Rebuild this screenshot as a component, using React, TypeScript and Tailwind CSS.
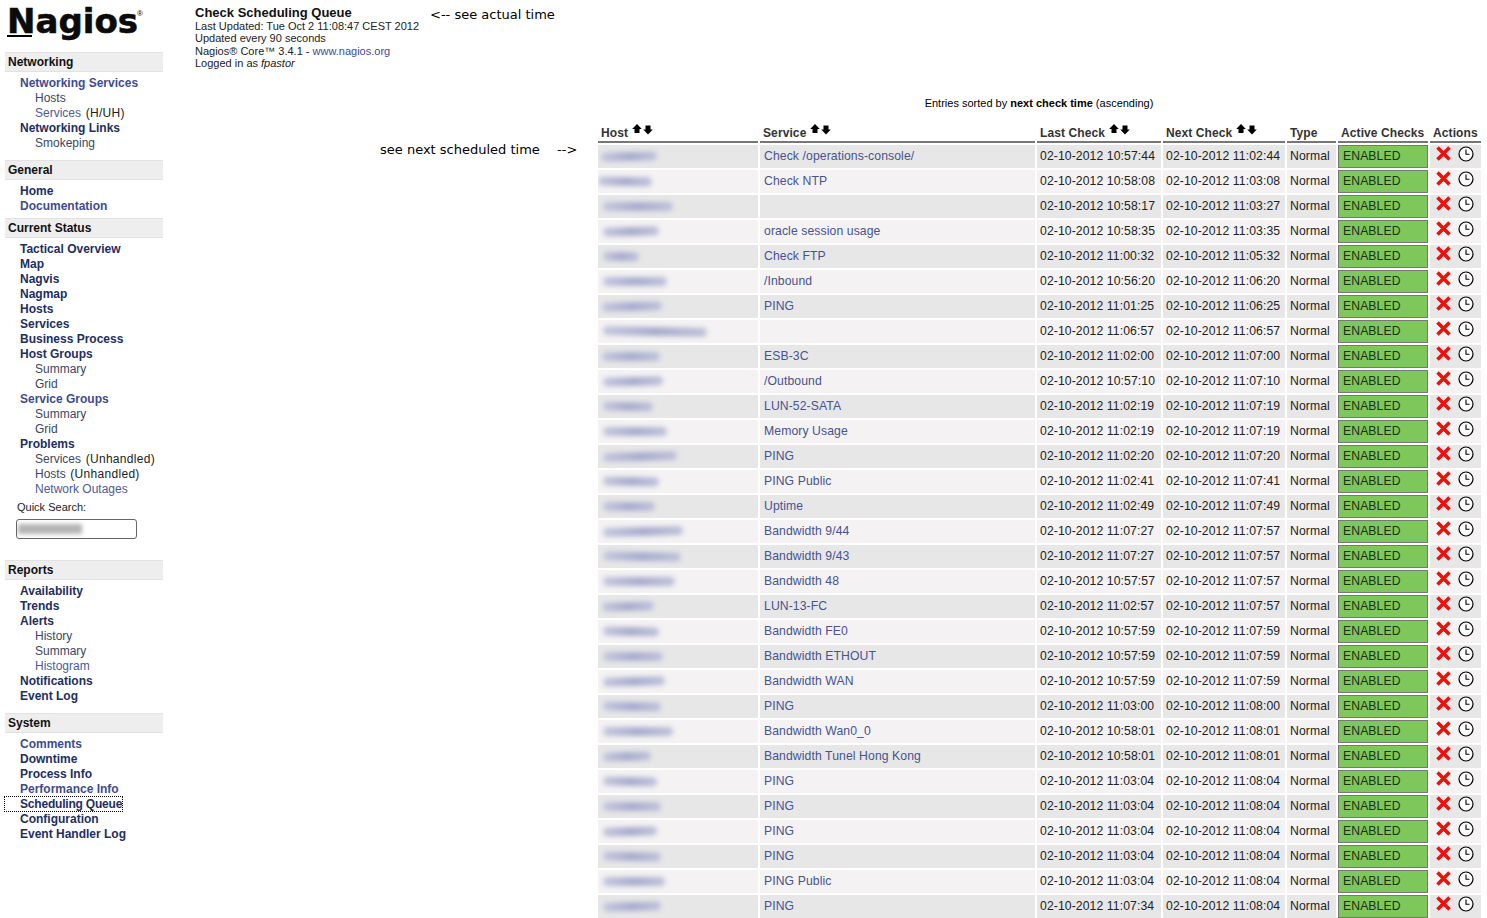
import React from "react";

type Link = { t: string; sub?: boolean; light?: boolean; extra?: string; focus?: boolean };

function NavLink({ l }: { l: Link }) {
  return (
    <div className={`h-[15px] leading-[15px] whitespace-nowrap ${l.sub ? "pl-[35px] font-normal" : "pl-[20px] font-bold"}`}>
      <span
        className={`relative ${l.focus ? "tracking-[-0.2px]" : ""} ${
          l.sub
            ? l.light
              ? "text-[#4d5a96]"
              : "text-[#3c4660]"
            : l.light
            ? "text-[#3f4c8c]"
            : "text-[#222e5e]"
        }`}
      >
        {l.t}
        {l.focus && <span className="absolute left-[-16px] right-[-1px] top-[-1px] bottom-[-1px] border border-dotted border-black" />}
      </span>
      {l.extra && <span className="text-[#222] ml-[1px] tracking-[0.3px]"> {l.extra}</span>}
    </div>
  );
}

function Section({ title, links, mb }: { title: string; links: Link[]; mb: string }) {
  return (
    <div className={mb}>
      <div className="ml-[5px] w-[158px] h-[20px] leading-[19px] bg-[#eeeeee] border-y border-[#e2e2e2] pl-[3px] font-bold text-[#111]">
        {title}
      </div>
      <div className="mt-[4px]">
        {links.map((l) => (
          <NavLink key={l.t + (l.extra ?? "")} l={l} />
        ))}
      </div>
    </div>
  );
}

function SortArrows({ className }: { className?: string }) {
  return (
    <svg width="21" height="11" viewBox="0 0 21 11" className={className}>
      <path d="M5 0 L9.8 5 L7.5 5 L7.5 9 L2.5 9 L2.5 5 L0.2 5 Z" fill="#000" />
      <path d="M16 10.5 L11.2 5.5 L13.5 5.5 L13.5 1.5 L18.5 1.5 L18.5 5.5 L20.8 5.5 Z" fill="#000" />
    </svg>
  );
}

function RedX() {
  return (
    <svg width="15" height="15" viewBox="0 0 15 15">
      <path d="M1.5 1.5 L13.5 13.5 M13.5 1.5 L1.5 13.5" stroke="#e8130c" strokeWidth="3.6" />
    </svg>
  );
}

function Clock() {
  return (
    <svg width="16" height="16" viewBox="0 0 16 16">
      <circle cx="8" cy="8" r="7" fill="#fff" stroke="#000" strokeWidth="1.2" />
      <path d="M8 3.5 V8.3 H11.5" fill="none" stroke="#000" strokeWidth="1.1" />
    </svg>
  );
}

const rows: [number, number, string, string, string][] = [
  [3, 56, "Check /operations-console/", "10:57:44", "11:02:44"],
  [0, 54, "Check NTP", "10:58:08", "11:03:08"],
  [5, 70, "", "10:58:17", "11:03:27"],
  [5, 56, "oracle session usage", "10:58:35", "11:03:35"],
  [5, 36, "Check FTP", "11:00:32", "11:05:32"],
  [5, 64, "/Inbound", "10:56:20", "11:06:20"],
  [4, 60, "PING", "11:01:25", "11:06:25"],
  [5, 104, "", "11:06:57", "11:06:57"],
  [4, 58, "ESB-3C", "11:02:00", "11:07:00"],
  [5, 60, "/Outbound", "10:57:10", "11:07:10"],
  [5, 50, "LUN-52-SATA", "11:02:19", "11:07:19"],
  [5, 64, "Memory Usage", "11:02:19", "11:07:19"],
  [5, 74, "PING", "11:02:20", "11:07:20"],
  [5, 56, "PING Public", "11:02:41", "11:07:41"],
  [5, 52, "Uptime", "11:02:49", "11:07:49"],
  [5, 80, "Bandwidth 9/44", "11:07:27", "11:07:57"],
  [5, 78, "Bandwidth 9/43", "11:07:27", "11:07:57"],
  [5, 72, "Bandwidth 48", "10:57:57", "11:07:57"],
  [4, 52, "LUN-13-FC", "11:02:57", "11:07:57"],
  [5, 56, "Bandwidth FE0", "10:57:59", "11:07:59"],
  [5, 60, "Bandwidth ETHOUT", "10:57:59", "11:07:59"],
  [5, 62, "Bandwidth WAN", "10:57:59", "11:07:59"],
  [5, 58, "PING", "11:03:00", "11:08:00"],
  [5, 70, "Bandwidth Wan0_0", "10:58:01", "11:08:01"],
  [5, 48, "Bandwidth Tunel Hong Kong", "10:58:01", "11:08:01"],
  [5, 54, "PING", "11:03:04", "11:08:04"],
  [5, 58, "PING", "11:03:04", "11:08:04"],
  [5, 54, "PING", "11:03:04", "11:08:04"],
  [5, 58, "PING", "11:03:04", "11:08:04"],
  [5, 62, "PING Public", "11:03:04", "11:08:04"],
  [5, 58, "PING", "11:07:34", "11:08:04"],
];

const th = "text-left font-bold text-[#333] text-[12px] border-b-2 border-[#777] align-bottom p-0 pl-[3px] h-[24px] leading-[15px] whitespace-nowrap";

export default function App() {
  return (
    <div className="w-[1487px] h-[918px] overflow-hidden bg-white flex text-[12px] text-black font-['Liberation_Sans',Arial,sans-serif]">
      <aside className="w-[190px] shrink-0 pt-[7px]">
        <div className="relative h-[45px] shrink-0 pl-[7px] leading-[33px]">
          <span className="relative inline-block text-[34px] font-bold text-[#0b0b0b] font-['DejaVu_Sans',sans-serif] leading-[29px] [-webkit-text-stroke:0.6px_#0b0b0b]">
            Nagios
            <span className="absolute left-0 bottom-[-1px] w-[25px] h-[2.5px] bg-black" />
          </span>
          <span className="absolute left-[137px] top-[2px] text-[8px] leading-[10px] font-['Liberation_Sans',sans-serif]">®</span>
        </div>
        <Section
          title="Networking"
          mb="mb-[9px]"
          links={[
            { t: "Networking Services", light: true },
            { t: "Hosts", sub: true },
            { t: "Services", sub: true, light: true, extra: "(H/UH)" },
            { t: "Networking Links" },
            { t: "Smokeping", sub: true },
          ]}
        />
        <Section
          title="General"
          mb="mb-[4px]"
          links={[{ t: "Home" }, { t: "Documentation", light: true }]}
        />
        <Section
          title="Current Status"
          mb="mb-0"
          links={[
            { t: "Tactical Overview" },
            { t: "Map" },
            { t: "Nagvis" },
            { t: "Nagmap" },
            { t: "Hosts" },
            { t: "Services" },
            { t: "Business Process" },
            { t: "Host Groups" },
            { t: "Summary", sub: true },
            { t: "Grid", sub: true },
            { t: "Service Groups", light: true },
            { t: "Summary", sub: true },
            { t: "Grid", sub: true },
            { t: "Problems" },
            { t: "Services", sub: true, extra: "(Unhandled)" },
            { t: "Hosts", sub: true, extra: "(Unhandled)" },
            { t: "Network Outages", sub: true, light: true },
          ]}
        />
        <div className="mt-[3px] pl-[17px] h-[15px] leading-[15px] text-[11px] text-[#222]">Quick Search:</div>
        <div className="mt-[4px] ml-[16px] w-[121px] h-[20px] rounded-[3px] border border-[#666] bg-white overflow-hidden pl-[1px] pt-[4px]">
          <div className="w-[64px] h-[10px] bg-[#b4b4b4] blur-[2px]" />
        </div>
        <div className="h-[21px]" />
        <Section
          title="Reports"
          mb="mb-[9px]"
          links={[
            { t: "Availability" },
            { t: "Trends" },
            { t: "Alerts" },
            { t: "History", sub: true },
            { t: "Summary", sub: true },
            { t: "Histogram", sub: true, light: true },
            { t: "Notifications" },
            { t: "Event Log" },
          ]}
        />
        <Section
          title="System"
          mb="mb-0"
          links={[
            { t: "Comments", light: true },
            { t: "Downtime" },
            { t: "Process Info" },
            { t: "Performance Info", light: true },
            { t: "Scheduling Queue", focus: true },
            { t: "Configuration" },
            { t: "Event Handler Log" },
          ]}
        />
      </aside>

      <main className="flex-1 min-w-0 flex flex-col">
        <div className="h-[96px] shrink-0 flex pl-[5px] pt-[6px]">
          <div className="w-[235px] shrink-0 text-[11px] leading-[12.3px] text-[#222]">
            <div className="text-[13px] font-bold leading-[14px] text-[#111]">Check Scheduling Queue</div>
            <div>Last Updated: Tue Oct 2 11:08:47 CEST 2012</div>
            <div>Updated every 90 seconds</div>
            <div>
              Nagios® Core™ 3.4.1 - <span className="text-[#3f4c8c]">www.nagios.org</span>
            </div>
            <div>
              Logged in as <i>fpastor</i>
            </div>
          </div>
          <div className="pt-[1px] text-[13px] leading-[16px] font-['DejaVu_Sans',sans-serif]">{"<-- see actual time"}</div>
        </div>
        <div className="flex shrink-0">
          <div className="w-[408px] shrink-0 pl-[190px] pt-[46px] text-[13px] leading-[16px] font-['DejaVu_Sans',sans-serif]">
            <span className="inline-block w-[177px] whitespace-nowrap">see next scheduled time</span>
            {"-->"}
          </div>
          <div className="flex-1 min-w-0">
            <div className="h-[21px] text-[11px] leading-[14px] text-center ml-[-1px] w-[884px]">
              Entries sorted by <b>next check time</b> (ascending)
            </div>
            <table className="border-separate border-spacing-[2px] table-fixed w-[887px] ml-[-2px] text-[12.2px] tracking-[0.1px]">
              <colgroup>
                <col className="w-[160px]" />
                <col className="w-[275px]" />
                <col className="w-[124px]" />
                <col className="w-[122px]" />
                <col className="w-[49px]" />
                <col className="w-[90px]" />
                <col className="w-[51px]" />
              </colgroup>
              <thead>
                <tr>
                  {["Host", "Service", "Last Check", "Next Check"].map((h) => (
                    <th key={h} className={th}>
                      <span className="inline-flex items-start">
                        {h}
                        <SortArrows className="ml-[4px] mt-[-2px]" />
                      </span>
                    </th>
                  ))}
                  <th className={th}>Type</th>
                  <th className={th}>Active Checks</th>
                  <th className={th}>Actions</th>
                </tr>
              </thead>
              <tbody>
                {rows.map((r, i) => {
                  const bg = i % 2 === 0 ? "bg-[#e7e7e7]" : "bg-[#f4f2f2]";
                  const td = `${bg} p-0 h-[23px] pl-[3px] text-[#222] whitespace-nowrap`;
                  return (
                    <tr key={i}>
                      <td className={`${bg} p-0 h-[23px] overflow-hidden`}>
                        <div
                          className="h-[9px] bg-linear-to-r from-[#c4c7de] via-[#a8acce] to-[#bec2da] blur-[2.5px] rounded-full"
                          style={{ width: r[1], marginLeft: r[0], transform: `rotate(${i % 3 === 0 ? -1.5 : i % 3 === 1 ? 1 : 0}deg)` }}
                        />
                      </td>
                      <td className={`${bg} p-0 pl-[4px] text-[#47538f] whitespace-nowrap`}>{r[2]}</td>
                      <td className={td}>02-10-2012 {r[3]}</td>
                      <td className={td}>02-10-2012 {r[4]}</td>
                      <td className={td}>Normal</td>
                      <td className="p-0 h-[23px] pl-[4px] bg-[#7ec75a] border border-[#777] text-[#1f2f1a]">ENABLED</td>
                      <td className={`${bg} p-0`}>
                        <div className="flex items-center gap-[7px] pl-[6px] mt-[-6px]">
                          <RedX />
                          <Clock />
                        </div>
                      </td>
                    </tr>
                  );
                })}
              </tbody>
            </table>
          </div>
        </div>
      </main>
    </div>
  );
}
